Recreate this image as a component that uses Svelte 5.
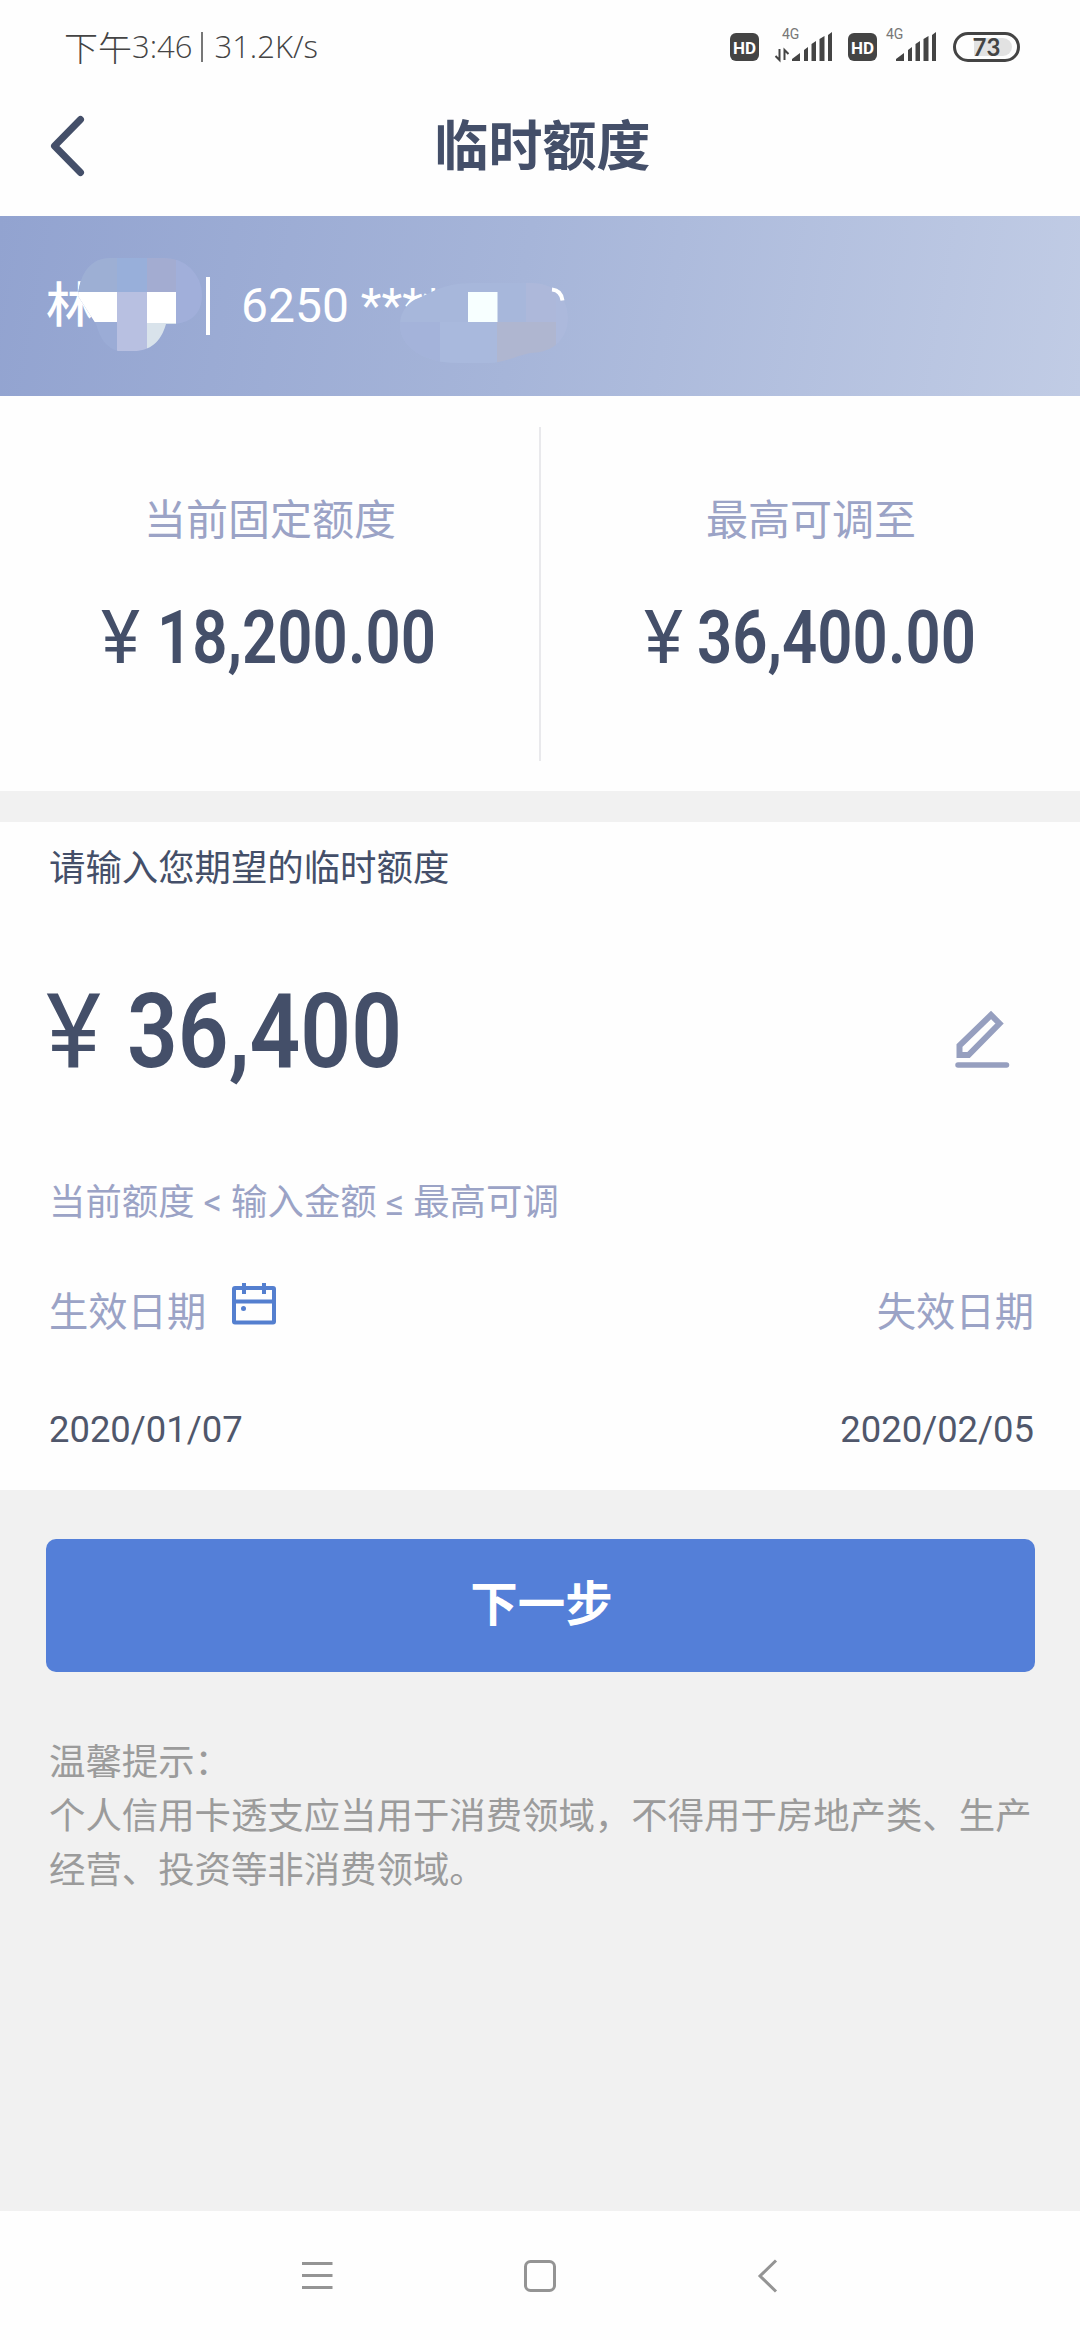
<script>
    const holder = "林"
    const cardNo = "6250 ****"

    const limits = [
        { label: "当前固定额度", value: "18,200.00", yenX: 101, valueX: 157 },
        { label: "最高可调至", value: "36,400.00", yenX: 103, valueX: 156 }
    ]

    let amount = "36,400"
    let startDate = "2020/01/07"
    let endDate = "2020/02/05"
</script>

<style>
    :global(body) {
        margin: 0;
        background: #f1f1f1;
    }

    .page {
        width: 1080px;
        height: 2340px;
        display: flex;
        flex-direction: column;
        overflow: hidden;
        background: #f1f1f1;
        color: #444f69;
        font-family: Roboto, "Noto Sans CJK SC", sans-serif;
        font-size: 36.4px;
    }

    svg {
        display: block;
        flex: none;
        overflow: visible;
    }

    .status {
        height: 76px;
        padding: 0 60px 0 64px;
        box-sizing: border-box;
        display: flex;
        justify-content: space-between;
        background: #fefefe;
        color: #444;
    }

    .clock {
        display: flex;
        align-items: center;
        height: 92px;
        font: 300 31px "Open Sans", "Noto Sans CJK SC", sans-serif;
        white-space: pre;
    }

    .clock .half {
        font-size: 34px;
    }

    .clock i {
        width: 2px;
        height: 30px;
        margin: 2px 11px 0 9px;
        background: #777;
    }

    .title {
        height: 140px;
        display: grid;
        grid-template-columns: 180px 1fr 180px;
        align-items: center;
        background: #fefefe;
    }

    .title svg {
        margin-left: 46px;
    }

    h1 {
        margin: 0;
        font-size: 54px;
        line-height: 80px;
        font-weight: 700;
        text-align: center;
        padding: 4px 0 0 5px;
    }

    .card {
        position: relative;
        height: 180px;
        display: flex;
        align-items: center;
        padding-left: 46px;
        color: #fff;
        background: linear-gradient(100deg, #92a3d0 0%, #a6b5d9 48%, #c1cce5 100%);
    }

    .holder {
        width: 160px;
        font-size: 48px;
        font-weight: 500;
        line-height: 60px;
    }

    .card i {
        width: 4px;
        height: 58px;
        margin-right: 31px;
        background: #fff;
    }

    .number {
        font-size: 48px;
        line-height: 60px;
    }

    .mask {
        position: absolute;
        left: 0;
        top: 0;
    }

    .limits {
        height: 395px;
        display: flex;
        align-items: center;
        background: #fefefe;
    }

    .limit {
        flex: 1;
        height: 334px;
        display: flex;
        flex-direction: column;
        align-items: center;
    }

    .limit + .limit {
        border-left: 2px solid #e9e9ec;
        margin-left: -1px;
    }

    .limit p {
        margin: 62px 0 46px;
        height: 64px;
        line-height: 64px;
        font-size: 42px;
        color: #9ba3c6;
    }

    .figure {
        fill: #444f69;
        font-family: Roboto, sans-serif;
        font-weight: 600;
    }

    .figure .yen {
        font-weight: 400;
    }

    .form {
        height: 668px;
        margin-top: 31px;
        padding: 0 46px 0 49px;
        box-sizing: border-box;
        background: #fefefe;
    }

    .form p {
        margin: 0;
        line-height: 54px;
    }

    .form .prompt {
        padding-top: 20px;
    }

    .amount {
        height: 136px;
        margin-top: 71px;
        display: flex;
        justify-content: space-between;
        align-items: center;
    }

    .amount .figure {
        margin-left: -49px;
    }

    .amount .pencil {
        margin: 10px 24px 0 0;
    }

    .form .rule {
        margin-top: 73px;
        color: #9ba3c6;
    }

    .row {
        display: flex;
        justify-content: space-between;
        align-items: center;
        height: 60px;
    }

    .labels {
        margin-top: 48px;
        font-size: 39.3px;
        color: #9ba3c6;
    }

    .labels span {
        display: flex;
        align-items: center;
    }

    .labels svg {
        margin: -8px 0 0 25px;
    }

    .dates {
        margin-top: 61px;
        color: #50576b;
    }

    .next {
        height: 133px;
        margin: 49px 45px 0 46px;
        padding: 0 0 11px 2px;
        border: 0;
        border-radius: 10px;
        background: #547fd8;
        color: #fff;
        font: 700 47.5px "Noto Sans CJK SC", sans-serif;
    }

    .tips {
        flex: 1;
        margin: 64px 0 0 49px;
        line-height: 54px;
        color: #9b9b9b;
        white-space: nowrap;
    }

    .nav {
        height: 129px;
        display: flex;
        justify-content: center;
        align-items: center;
        background: #fefefe;
    }
</style>

{#snippet hd(x)}
    <rect {x} y="33" width="29" height="28" rx="6" fill="#444" />
    <text x={x + 14.5} y="53.5" text-anchor="middle" font-size="17" font-weight="700" fill="#fff">HD</text>
{/snippet}

{#snippet signal(x)}
    <text x={x - 10} y="39" font-size="14" fill="#777">4G</text>
    <path
        transform="translate({x} 0)"
        fill="#444"
        d="M0 61v-2l8-6v8zM12 61V50l4-3v14zM19.500 61V44l4.500-3v20zM27.500 61V39l5-3v25zM36 61V35l4-3v29z"
    />
{/snippet}

<div class="page">
    <div class="status">
        <div class="clock"><span class="half">下午</span>3:46<i></i>31.2K/s</div>
        <svg width="300" height="76" viewBox="720 0 300 76" font-family="Roboto, sans-serif">
            {@render hd(730)}
            <path d="M779.500 49v11l-4-4M784.500 60V50l4 4" fill="none" stroke="#444" stroke-width="2" />
            {@render signal(792)}
            {@render hd(848)}
            {@render signal(896)}
            <rect x="954.500" y="33.500" width="64" height="27" rx="13.500" fill="#fefefe" stroke="#444" stroke-width="3" />
            <path d="M974 38h29a9 9 0 0 1 0 18h-29z" fill="#e2e2e2" />
            <text x="986.500" y="56" text-anchor="middle" font-family="Lato, sans-serif" font-size="24" font-weight="700" fill="#444">73</text>
        </svg>
    </div>

    <div class="title">
        <svg width="44" height="70" viewBox="46 112 44 70">
            <path d="M80.500 120.500L54.500 147l26 26.500" fill="none" stroke="#444f69" stroke-width="7" stroke-linecap="round" stroke-linejoin="round" />
        </svg>
        <h1>临时额度</h1>
    </div>

    <div class="card">
        <span class="holder">{holder}</span>
        <i></i>
        <span class="number">{cardNo}</span>
        <!-- mosaic over the private part of the name and the number -->
        <svg class="mask" width="600" height="180" viewBox="0 216 600 180">
            <defs>
                <clipPath id="name">
                    <path d="M110 258h54a37 37 0 0 1 38 37c0 18-10 27-27 29h-9c-5 18-16 27-32 27h-16c-12-3-18-13-22-27l-18-28c2-24 14-38 32-38z" />
                </clipPath>
                <clipPath id="digits">
                    <path d="M472 283h60c22 0 36 15 36 35s-14 35-38 35c-14 3-26 10-42 10h-30c-34 0-58-16-58-38 0-12 6-20 14-25 16-6 28-17 58-17z" />
                </clipPath>
            </defs>
            <g clip-path="url(#name)">
                <path d="M70 250h140v110H70z" fill="#9bacd6" />
                <path d="M70 250h47v42H70z" fill="#9dafd4" />
                <path d="M117 250h30v42h-30z" fill="#98afda" />
                <path d="M147 250h29v42h-29z" fill="#a3acd1" />
                <path d="M176 250h34v74h-34z" fill="#a1afda" />
                <path d="M78 292h39v30H78zM147 292h29v32h-29z" fill="#fff" />
                <path d="M117 292h30v60h-30z" fill="#b8c0e1" />
                <path d="M147 323h29v30h-29z" fill="#d9e3eb" />
            </g>
            <g clip-path="url(#digits)">
                <path d="M395 280h180v90H395z" fill="#a7b7db" />
                <path d="M395 322h45v50h-45z" fill="#a4b3da" />
                <path d="M440 322h57v50h-57z" fill="#a9b9dd" />
                <path d="M526 280h30v42h-30z" fill="#adb8da" />
                <path d="M497 322h59v50h-59z" fill="#afb6d0" />
                <path d="M556 290h20v70h-20z" fill="#acb9dc" />
                <path d="M468 292h29.500v30H468z" fill="#f7ffff" />
            </g>
            <path d="M552 289.500c6 .500 9.500 4 10.500 11" fill="none" stroke="#fff" stroke-width="4" />
        </svg>
    </div>

    <div class="limits">
        {#each limits as item}
            <div class="limit">
                <p>{item.label}</p>
                <svg class="figure" width="540" height="90" viewBox="0 600 540 90" font-size="74">
                    <text class="yen" x={item.yenX} y="663.500" textLength="39" lengthAdjust="spacingAndGlyphs">¥</text>
                    <text x={item.valueX} y="663.500" textLength="279" lengthAdjust="spacingAndGlyphs">{item.value}</text>
                </svg>
            </div>
        {/each}
    </div>

    <div class="form">
        <p class="prompt">请输入您期望的临时额度</p>
        <div class="amount">
            <svg class="figure" width="460" height="136" viewBox="0 968 460 136" font-size="104">
                <text class="yen" x="46" y="1068" textLength="55" lengthAdjust="spacingAndGlyphs">¥</text>
                <text x="127" y="1068" textLength="275" lengthAdjust="spacingAndGlyphs">{amount}</text>
            </svg>
            <svg class="pencil" width="56" height="60" viewBox="953 1008 56 60" fill="none" stroke="#969fbf">
                <path d="M958.500 1053v-9.500L990 1013l8.500 8.500-31 31.500z" stroke-width="6" />
                <path d="M957 1063h48.500" stroke-width="5.500" stroke-linecap="round" />
            </svg>
        </div>
        <p class="rule">当前额度 &lt; 输入金额 ≤ 最高可调</p>
        <div class="row labels">
            <span>
                生效日期
                <svg width="46" height="44" viewBox="231 1282 46 44" fill="none" stroke="#547fcf" stroke-width="4">
                    <rect x="234" y="1288" width="40" height="34.500" rx="1" />
                    <path d="M234 1301.500h40M244 1283v11M264 1283v11" />
                    <circle cx="243.500" cy="1308.500" r="2.500" fill="#547fcf" stroke="none" />
                </svg>
            </span>
            <span>失效日期</span>
        </div>
        <div class="row dates">
            <span>{startDate}</span>
            <span>{endDate}</span>
        </div>
    </div>

    <button class="next">下一步</button>

    <div class="tips">
        温馨提示：<br />
        个人信用卡透支应当用于消费领域，不得用于房地产类、生产<br />
        经营、投资等非消费领域。
    </div>

    <div class="nav">
        <svg width="600" height="60" viewBox="240 2245 600 60" fill="none" stroke="#949494" stroke-width="3">
            <path d="M302 2262.500h30.500M302 2274.500h30.500M302 2286.500h30.500" />
            <rect x="525.500" y="2260.500" width="29" height="29" rx="5" />
            <path d="M776 2259.500L760 2275l16 15.500" />
        </svg>
    </div>
</div>
